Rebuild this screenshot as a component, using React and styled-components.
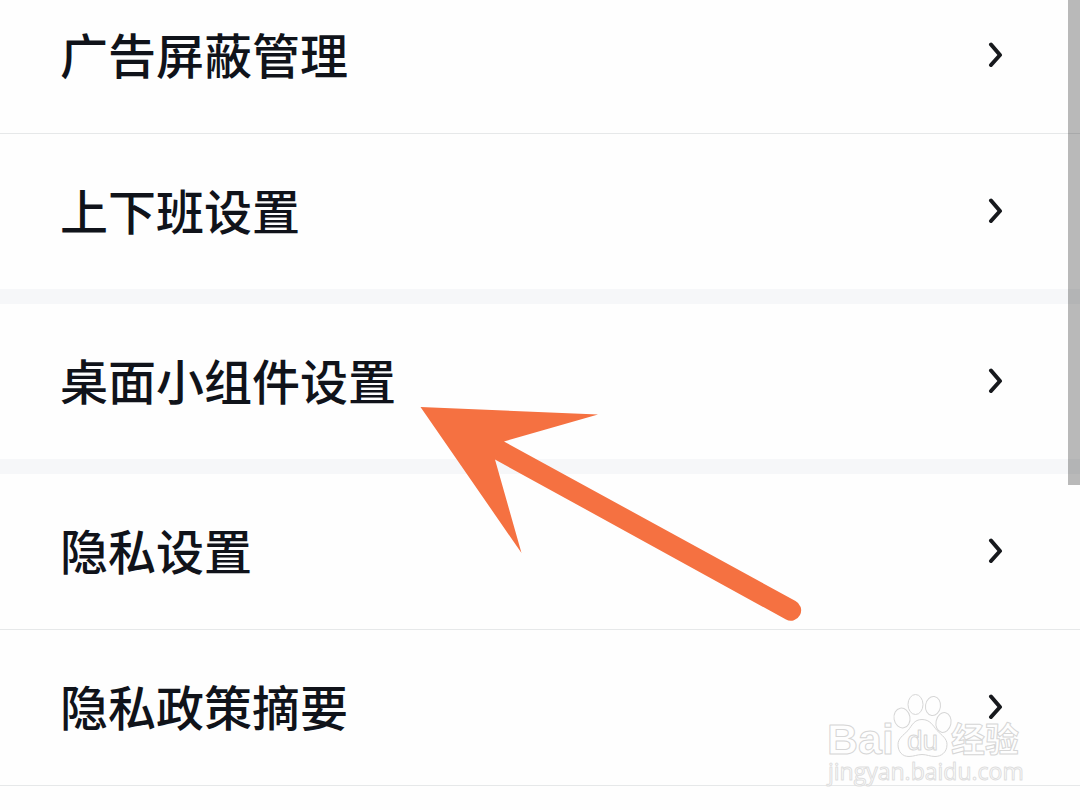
import React from "react";
import styled, { createGlobalStyle } from "styled-components";

const GlobalStyle = createGlobalStyle`
  * {
    box-sizing: border-box;
  }
  body {
    margin: 0;
    background-color: #fefefe;
    font-family: "Noto Sans CJK SC", sans-serif;
  }
`;

const Screen = styled.main`
  position: relative;
  height: 100vh;
  overflow: hidden;
  background-color: #fefefe;
`;

/* The list rests slightly scrolled, so the first row starts above the edge */
const SettingsList = styled.ul`
  list-style: none;
  margin: -22px 0 0;
  padding: 0;
`;

const SettingsItem = styled.li`
  border-bottom: ${({ $groupEnd }) =>
    $groupEnd ? "15px solid #f6f7f9" : "1px solid #e6e8e9"};
`;

const RowButton = styled.button`
  display: flex;
  align-items: center;
  justify-content: space-between;
  width: 100%;
  padding: 39px 76px 44px 60px;
  border: none;
  background: none;
  color: #10131a;
  font-family: inherit;
  font-size: 48px;
  font-weight: 500;
  line-height: 72px;
  text-align: left;
  cursor: pointer;
`;

const Chevron = styled.svg`
  flex: none;
  width: 16px;
  height: 28px;
  fill: none;
  stroke: #17191d;
  stroke-width: 4;
  stroke-linecap: round;
  stroke-linejoin: round;
`;

const ScrollThumb = styled.div`
  position: absolute;
  top: 0;
  right: 0;
  width: 12px;
  height: 60%;
  max-height: 485px;
  background-color: rgba(0, 0, 0, 0.27);
`;

const Pointer = styled.svg`
  position: absolute;
  top: 400px;
  left: 415px;
  width: 392px;
  height: 226px;
  fill: #f57141;
  pointer-events: none;
`;

const Watermark = styled.svg`
  position: absolute;
  right: 50px;
  bottom: 16px;
  width: 210px;
  height: 106px;
  fill: #fefefe;
  stroke: #d6d6d6;
  stroke-width: 1;
  stroke-linejoin: round;
  pointer-events: none;
`;

const LatinMark = styled.text`
  font-family: "Liberation Sans", sans-serif;
  font-size: 43px;
  font-weight: 700;
`;

const PawMark = styled.text`
  font-family: "Liberation Sans", sans-serif;
  font-size: 28px;
`;

const HanMark = styled.text`
  font-family: "Noto Sans CJK SC", sans-serif;
  font-size: 34px;
  font-weight: 700;
`;

const SiteMark = styled.text`
  font-family: "Open Sans", sans-serif;
  font-size: 23px;
  stroke: #dedede;
`;

const items = [
  { label: "广告屏蔽管理" },
  { label: "上下班设置", groupEnd: true },
  { label: "桌面小组件设置", groupEnd: true },
  { label: "隐私设置" },
  { label: "隐私政策摘要" },
];

const SettingsRow = ({ label, groupEnd }) => (
  <SettingsItem $groupEnd={groupEnd}>
    <RowButton type="button">
      {label}
      <Chevron viewBox="0 0 16 28" aria-hidden="true">
        <path d="M3 5.500 12 16 3 26" />
      </Chevron>
    </RowButton>
  </SettingsItem>
);

const BaiduMark = () => (
  <Watermark viewBox="820 688 210 106">
    <LatinMark x="827" y="754">
      Bai
    </LatinMark>
    <ellipse cx="902" cy="718" rx="8" ry="10" transform="rotate(-10 902 718)" />
    <ellipse cx="915.5" cy="704.5" rx="7.5" ry="10" />
    <ellipse cx="933" cy="706" rx="7.5" ry="9.5" transform="rotate(8 933 706)" />
    <ellipse cx="943.5" cy="722.5" rx="7.5" ry="10" transform="rotate(12 943.5 722.5)" />
    <path d="M922 719.5c8 0 11 6 15 11 5 5 10 8 10 14 0 8-6 12-12 12-5 0-8-2-13-2s-8 2-13 2c-7 0-11-5-11-12 0-6 5-9 10-14 4-5 6-11 14-11z" />
    <PawMark x="907" y="750">
      du
    </PawMark>
    <HanMark x="951" y="752">
      经验
    </HanMark>
    <SiteMark x="828" y="780">
      jingyan.baidu.com
    </SiteMark>
  </Watermark>
);

const App = () => {
  return (
    <Screen>
      <GlobalStyle />
      <SettingsList>
        {items.map((item) => (
          <SettingsRow key={item.label} {...item} />
        ))}
      </SettingsList>
      <ScrollThumb />
      <Pointer viewBox="415 400 392 226" aria-hidden="true">
        <path d="M420.5 407 598 414.500 504 441.500 795.500 601A10 10 0 0 1 786 619.500L495 459.500 521.500 553z" />
      </Pointer>
      <BaiduMark />
    </Screen>
  );
};

export default App;
